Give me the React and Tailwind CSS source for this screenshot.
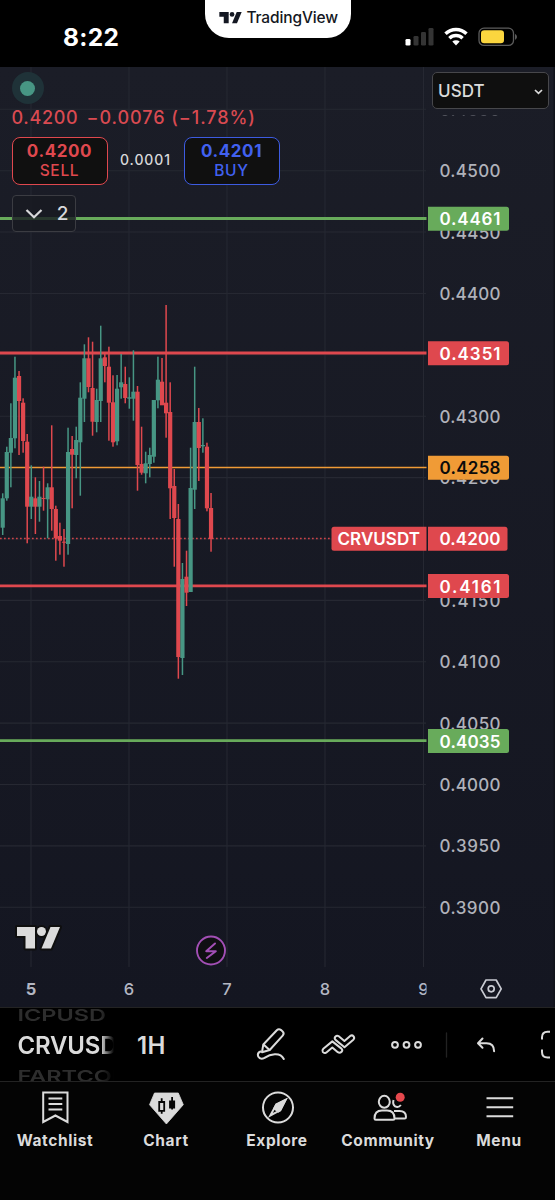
import clsx from "clsx";

const UP = "#479684";
const DOWN = "#df484e";
const GREEN = "#68ab5b";
const ORANGE = "#f09b36";

// [high, low, body top, body bottom, direction]
const candles = [
  [493.3, 535, 498.3, 527.7, 1],
  [446.7, 500.7, 452, 498.3, 1],
  [403.3, 487.3, 438, 452.7, 1],
  [356.7, 448.3, 377.7, 438.3, 1],
  [371, 455, 376, 401, 0],
  [398.3, 452.7, 402.7, 441, 0],
  [434, 543.3, 441.7, 506.7, 0],
  [465.3, 519, 496.7, 506.7, 1],
  [477.3, 534, 498.3, 506.7, 0],
  [481, 521.7, 496.7, 506.7, 1],
  [466.7, 510.7, 498, 499, 0],
  [483.3, 538.3, 487.3, 499.3, 1],
  [425.3, 530.7, 487.3, 509, 0],
  [505.7, 560.7, 509, 538.3, 0],
  [522.7, 554.7, 536, 540.7, 0],
  [529, 566.7, 541.7, 542.7, 0],
  [427.7, 554.7, 452, 544, 1],
  [436, 508.3, 449, 454.7, 0],
  [426.7, 478.3, 440, 455, 1],
  [382.3, 495.7, 397.7, 442.3, 1],
  [344.3, 422, 358.3, 398.7, 1],
  [337.3, 392.3, 358.3, 387, 0],
  [341.7, 435.7, 388, 421.7, 0],
  [388.7, 432.3, 400, 422, 1],
  [325.7, 422, 358.3, 401, 1],
  [354, 382.3, 357.3, 366, 0],
  [346.7, 440.7, 366.7, 402.7, 0],
  [375.3, 446.7, 402.3, 442.3, 0],
  [375, 445.3, 388.7, 441.3, 1],
  [354, 398.7, 382.3, 387.3, 1],
  [366.7, 403.3, 384, 398, 0],
  [377.3, 408.7, 397.3, 398.7, 1],
  [350.3, 420.7, 391.7, 398.7, 1],
  [386, 490.7, 391.7, 465, 0],
  [426.7, 474.7, 464, 472.7, 0],
  [451.7, 483.3, 463.3, 473.3, 1],
  [447.7, 477.3, 455, 464, 1],
  [400, 462.7, 400, 456.7, 1],
  [356.7, 408.3, 379.7, 400.3, 1],
  [358, 405, 381.7, 405.3, 0],
  [305, 437.7, 402.7, 413.3, 0],
  [382.3, 519, 412, 488.3, 0],
  [469, 566.7, 486, 518, 0],
  [504, 678.7, 519, 657, 0],
  [563, 675, 579, 658, 1],
  [550.7, 606, 576.7, 592.7, 0],
  [447.7, 592, 488, 592, 1],
  [366.7, 509, 422, 489.7, 1],
  [408, 481, 422, 448, 0],
  [418.3, 452.7, 445, 446.3, 1],
  [442.7, 511.3, 446.7, 508.3, 0],
  [493, 551.7, 508, 539, 0],
];

const prices = [
  "0.4550", "0.4500", "0.4450", "0.4400", "0.4350", "0.4300", "0.4250",
  "0.4200", "0.4150", "0.4100", "0.4050", "0.4000", "0.3950", "0.3900",
];
const hiddenPrices = ["0.4550", "0.4350", "0.4200"];

const days = [
  { x: 31, label: "5" },
  { x: 129, label: "6" },
  { x: 227, label: "7" },
  { x: 325, label: "8" },
  { x: 423.5, label: "9" },
];

const levels = [
  { y: 218.5, price: "0.4461", color: GREEN, text: "#fff", width: 2.8 },
  { y: 353, price: "0.4351", color: DOWN, text: "#fff", width: 2.8 },
  { y: 467.5, price: "0.4258", color: ORANGE, text: "#0b0b0b", width: 1.5 },
  { y: 585.8, price: "0.4161", color: DOWN, text: "#fff", width: 2.8 },
  { y: 740.7, price: "0.4035", color: GREEN, text: "#fff", width: 2.8 },
];

function TvLogo({ className, stroke }) {
  return (
    <svg viewBox="-2 -2 47 26" className={className} fill="currentColor" stroke={stroke} strokeWidth={stroke ? 4 : 0} paintOrder="stroke" strokeLinejoin="round">
      <path d="M0 0h18v21.5H8.5V9H0z" />
      <circle cx="24.5" cy="4.5" r="4.5" />
      <path d="M33.500 0H43l-9 21.500H24.500z" />
    </svg>
  );
}

function StatusBar() {
  return (
    <header className="flex h-[67px] shrink-0 items-start bg-black">
      <div className="w-[205px] pt-[22px] pl-[63px] text-[24.5px] leading-[30px] font-bold tracking-[0.3px] text-white">
        8:22
      </div>
      <div className="flex h-[38px] w-[146px] items-center justify-center gap-[4.5px] rounded-b-[24px] bg-white pb-[2px] text-[#131722]">
        <TvLogo className="h-[13.5px] w-[25px]" />
        <span className="-ml-px text-[15.5px] leading-[20px] font-medium tracking-[-0.12px] whitespace-nowrap">TradingView</span>
      </div>
      <svg viewBox="400 20 125 34" className="mt-5 ml-[49px] h-[34px] w-[125px]">
        <rect x="405.5" y="39" width="5" height="6.5" rx="1.3" fill="#fff" />
        <rect x="413.5" y="36" width="5" height="9.5" rx="1.3" fill="#343434" />
        <rect x="421" y="32" width="5" height="13.5" rx="1.3" fill="#343434" />
        <rect x="428.5" y="28" width="5" height="17.5" rx="1.3" fill="#343434" />
        <g fill="none" stroke="#fff" strokeWidth="3.400">
          <path d="M445.500 33.800a15 15 0 0 1 21 0" />
          <path d="M449.400 38.200a9.400 9.400 0 0 1 13.200 0" />
        </g>
        <path d="M452.300 41.600a5.400 5.400 0 0 1 7.400 0L456 45.400z" fill="#fff" />
        <rect x="479" y="28.200" width="34.500" height="17.200" rx="5" fill="none" stroke="#5c5c5c" strokeWidth="1.300" />
        <rect x="481" y="30.300" width="23" height="13" rx="3.200" fill="#fbd63f" />
        <path d="M515 34c2.600 1 2.600 4.800 0 5.800z" fill="#5c5c5c" />
      </svg>
    </header>
  );
}

function PriceChart() {
  return (
    <svg viewBox="0 67 555 940" className="h-[940px] w-[555px]" fontWeight="500" fontSize="17">
      <defs>
        <linearGradient id="bg" x1="0" y1="0" x2="0" y2="1">
          <stop offset="0" stopColor="#1b1d27" />
          <stop offset="1" stopColor="#141621" />
        </linearGradient>
        <clipPath id="plot">
          <rect x="0" y="67" width="426.500" height="940" />
        </clipPath>
        <clipPath id="peek">
          <rect x="430" y="115" width="100" height="6" />
        </clipPath>
      </defs>
      <rect x="0" y="67" width="555" height="940" fill="url(#bg)" />
      <rect x="553.500" y="67" width="1.500" height="940" fill="#10121a" />

      <g stroke="#262832" strokeWidth="1.100">
        {prices.map((p, i) => (
          <line key={p} x1="0" x2="426" y1={109.3 + i * 61.38} y2={109.3 + i * 61.38} />
        ))}
        {days.map((d) => (
          <line key={d.label} x1={d.x} x2={d.x} y1="67" y2="967" />
        ))}
      </g>

      {levels.map((l) => (
        <line key={l.price} x1="0" x2="426.500" y1={l.y} y2={l.y} stroke={l.color} strokeWidth={l.width} />
      ))}
      <line x1="0" x2="331" y1="538.500" y2="538.500" stroke={DOWN} strokeWidth="1.300" strokeDasharray="1.700 2.300" opacity="0.900" />

      {candles.map(([high, low, top, bottom, up], i) => {
        const x = 2.7 + i * 4.085;
        return (
          <g key={i} fill={up ? UP : DOWN}>
            <rect x={x - 0.75} y={high} width="1.500" height={low - high} />
            <rect x={x - 2.1} y={top} width="4.200" height={bottom - top} />
          </g>
        );
      })}

      <g fill="#b0b2ba">
        {prices.map((p, i) =>
          hiddenPrices.includes(p) ? null : (
            <text key={p} x="439.500" y={115.9 + i * 61.38} textLength="61">{p}</text>
          )
        )}
        <text x="439.500" y="115.600" textLength="61" clipPath="url(#peek)" opacity="0.350">0.4550</text>
      </g>

      {levels.map((l) => (
        <g key={l.price}>
          <path d={`M428 ${l.y - 11.7}h78.500q2.500 0 2.500 2.500v19q0 2.500-2.500 2.500h-78.500z`} fill={l.color} />
          <text x="439.500" y={l.y + 6.9} textLength="61" fill={l.text} fontWeight="600">{l.price}</text>
        </g>
      ))}

      {/* last price */}
      <path d="M426.500 526.800h-92.500q-2.500 0-2.500 2.500v19q0 2.500 2.500 2.500h92.500z" fill={DOWN} />
      <path d="M428 526.800h77q2.500 0 2.500 2.500v19q0 2.500-2.500 2.500h-77z" fill={DOWN} />
      <g fill="#fff" fontWeight="600">
        <text x="337.500" y="545.400" textLength="82.500">CRVUSDT</text>
        <text x="439.500" y="545.400" textLength="61">0.4200</text>
      </g>

      <g fill="#b3b6c2" fontSize="16.500" textAnchor="middle" clipPath="url(#plot)">
        {days.map((d, i) => (
          <text key={d.label} x={d.x} y="995.200" fontWeight={i === 0 ? 700 : 500}>{d.label}</text>
        ))}
      </g>

      {/* event marker */}
      <circle cx="211" cy="950.500" r="14" fill="#0f0f12" stroke="#a24fb5" strokeWidth="1.900" />
      <path d="M215 943.500l-8.800 7.700h9.600l-9 6.800" fill="none" stroke="#a24fb5" strokeWidth="2" strokeLinejoin="round" strokeLinecap="round" />

      {/* axis settings */}
      <g fill="none" stroke="#c9cbd3" strokeWidth="1.700" strokeLinejoin="round">
        <path d="M486 980h10.200l5 8.800-5 8.800H486l-5-8.800z" />
        <circle cx="491.200" cy="988.800" r="3" />
      </g>
    </svg>
  );
}

function TradeButton({ price, label, className }) {
  return (
    <button className={clsx("flex h-[48px] w-[96px] flex-col items-center rounded-[8px] border-[1.5px] bg-[#101010] pt-[3px]", className)}>
      <span className="text-[17px] leading-[20px] font-bold tracking-[0.6px]">{price}</span>
      <span className="text-[15.5px] leading-[20px] font-medium tracking-[0.7px]">{label}</span>
    </button>
  );
}

function ChartOverlay() {
  return (
    <div className="absolute inset-0 flex justify-between pt-[5px] pr-[6.5px] pl-[11.5px]">
      <div className="flex flex-col items-start">
        <span className="flex size-[32px] items-center justify-center rounded-full bg-[#1f3238]">
          <span className="size-[15px] rounded-full bg-[#479684]" />
        </span>
        <div className="mt-[2px] flex h-[22px] items-center gap-[8px] text-[18px] font-medium whitespace-nowrap text-[#d94a51]">
          <span className="tracking-[0.7px]">0.4200</span>
          <span className="tracking-[0.95px]">−0.0076 (−1.78%)</span>
        </div>
        <div className="mt-[8.5px] flex items-center">
          <TradeButton price="0.4200" label="SELL" className="border-[#df484e] text-[#df484e]" />
          <span className="-mt-[3px] w-[76px] text-center text-[14px] font-medium tracking-[0.9px] text-[#d8d8da]">0.0001</span>
          <TradeButton price="0.4201" label="BUY" className="border-[#3d5be0] text-[#4161f0]" />
        </div>
        <button className="mt-[10px] flex h-[37px] w-[64px] items-center justify-between rounded-[4px] border-[1.5px] border-[#3b3c42] bg-[#181a22]/80 pt-[2px] pr-[6px] pl-[12px] text-[19px] font-medium text-[#d8d8da]">
          <svg viewBox="0 0 18 10" className="h-[10px] w-[18px]" fill="none" stroke="currentColor" strokeWidth="2.200">
            <path d="M1.500 1l7.500 7.300L16.500 1" />
          </svg>
          2
        </button>
        <TvLogo className="mt-[693px] ml-[3.5px] h-[26px] w-[47px] overflow-visible text-[#dbdbdb]" stroke="#0f0f0f" />
      </div>
      <button className="flex h-[37px] w-[116.5px] items-center justify-between rounded-[5px] border-[1.5px] border-[#47474b] bg-[#0f0f0f] pt-[2px] pr-[5px] pl-[5px] text-[17px] font-medium tracking-[0.1px] text-[#dbdbdb]">
        USDT
        <svg viewBox="0 0 9 6" className="h-[6px] w-[9px]" fill="none" stroke="currentColor" strokeWidth="1.700">
          <path d="M1 1l3.500 3.300L8 1" />
        </svg>
      </button>
    </div>
  );
}

function Toolbar() {
  return (
    <div className="flex h-[75px] shrink-0 border-y border-[#232323] bg-black text-[#dbdbdb]">
      <div className="ml-[17.5px] flex w-[96px] flex-col overflow-hidden whitespace-nowrap mask-r-from-86% mask-r-to-100%">
        <span className="-mt-[1.5px] h-[18px] shrink-0 origin-top scale-y-70 text-[23.5px] leading-[24px] font-semibold text-[#2d2d2d]">ICPUSD</span>
        <span className="mt-[4.5px] h-[34px] shrink-0 text-[24px] leading-[34px] font-semibold tracking-[-0.2px]">CRVUSDT</span>
        <span className="mt-[4.7px] h-[18px] shrink-0 origin-top scale-y-70 text-[23.5px] leading-[24px] font-semibold text-[#2d2d2d]">FARTCOIN</span>
      </div>
      <span className="ml-[23.5px] flex h-[76px] w-[60px] items-center text-[24px] font-semibold tracking-[0.4px]">1H</span>
      <svg viewBox="200 1008 355 74" className="ml-[3px] h-[74px] w-[355px]" fill="none" stroke="currentColor" strokeWidth="2" strokeLinecap="round" strokeLinejoin="round">
        {/* pencil */}
        <path d="M263.300 1044.500l13.500-14.200q2-2 4.300-0.200l1.500 1.300q2 2 0.100 4.200l-13 14.400-7.700 2.200z" />
        <path d="M263.800 1044.800l5.500 5" />
        <path d="M260.500 1051.500q-3.600 1.500-2.300 5 2.300 3.700 6.300 1.300c5.500-3.600 15.500-6.500 19.300 1.200" />
        {/* indicators */}
        <path d="M323.300 1048.700l9-7.300 9.200 7.200q1.500 1.500 0.100 3.200-1.800 1.700-3.800 0.400l-5.500-4.600-6.200 5.100q-2 1-3.300-0.700-1-1.800 0.500-3.300z" />
        <path d="M353.300 1039.800l-8.800 7.400-9-7.300q-1.500-1.500-0.200-3.200 1.700-1.700 3.500-0.400l5.600 4.600 5.800-5q2-1.200 3.400 0.500 1.300 1.900-0.300 3.400z" />
        <circle cx="395" cy="1044.800" r="2.900" />
        <circle cx="406.500" cy="1044.800" r="2.900" />
        <circle cx="418" cy="1044.800" r="2.900" />
        <path d="M446.500 1033v24" stroke="#222" strokeWidth="1.300" />
        <path d="M482.500 1038.500l-4.500 4.800 4.500 4.500M478.500 1043.300h8c5 0 7.600 3.300 7.600 8" />
        <path d="M550 1031.800h-2.500q-5.500 0-5.500 5.500v2.200M542 1049.500v2.500q0 5.500 5.500 5.500h2.500" strokeLinecap="butt" />
      </svg>
    </div>
  );
}

const tabs = [
  {
    label: "Watchlist",
    icon: (
      <>
        <path d="M6.200 3.500h24.300V33L18.400 26.500 6.200 33z" />
        <path d="M11.500 9.400h13.800M11.500 14.900h13.800M11.500 20.400h13.800" />
      </>
    ),
  },
  {
    label: "Chart",
    icon: (
      <>
        <path d="M6.500 4h23.800l5 11.700L18.400 35 1.500 15.700z" fill="currentColor" strokeWidth="0.800" />
        <path d="M11.200 13h5v8.800h-5zM13.700 9.300V13M13.700 21.800v3" stroke="#050505" strokeWidth="1.800" />
        <path d="M22 12.500h4.200v6H22zM24.100 8v12.500" fill="#050505" stroke="#050505" strokeWidth="1.800" />
      </>
    ),
  },
  {
    label: "Explore",
    icon: (
      <>
        <circle cx="19" cy="18.500" r="15" />
        <path d="M26.500 11l-9.200 4.500-6 11 9.800-5.200z" />
        <path d="M26.500 11l-9.200 4.500-2 4 4 3 2-1.200z" fill="currentColor" />
      </>
    ),
  },
  {
    label: "Community",
    icon: (
      <>
        <ellipse cx="14.300" cy="12.800" rx="5.500" ry="6" />
        <path d="M4.500 29.500q0-8 7.500-8h5q7.500 0 7.500 8 0 1.300-1.300 1.300H5.800q-1.300 0-1.300-1.300zM24 22H29.500q6.500 0 6.500 6 0 1.500-1.300 1.500H24.500" />
        <path d="M23.500 11q-1.200 4.300 1.600 6.400 3.400 1.600 5.800-1.400" />
        <circle cx="30.200" cy="8.200" r="4.500" fill="#e5484d" stroke="none" />
      </>
    ),
  },
  {
    label: "Menu",
    icon: <path d="M5.500 9.300h26.700M5.500 18.300h26.700M5.500 27.200h26.700" />,
  },
];

function TabBar() {
  return (
    <nav className="grid h-[118px] shrink-0 grid-cols-5 bg-[#040404] text-[#dbdbdb]">
      {tabs.map((tab) => (
        <div key={tab.label} className="flex flex-col items-center pt-[7px]">
          <svg viewBox="0 0 37 37" className="-ml-px h-[37px] w-[37px] overflow-visible" fill="none" stroke="currentColor" strokeWidth="2">
            {tab.icon}
          </svg>
          <span className="mt-[4.5px] -ml-px text-[15.5px] leading-[20px] font-bold tracking-[0.6px]">{tab.label}</span>
        </div>
      ))}
    </nav>
  );
}

export default function App() {
  return (
    <div className="flex h-[1200px] w-[555px] flex-col overflow-hidden bg-black font-['Inter',sans-serif]">
      <StatusBar />
      <main className="relative h-[940px] shrink-0">
        <PriceChart />
        <ChartOverlay />
      </main>
      <Toolbar />
      <TabBar />
    </div>
  );
}
